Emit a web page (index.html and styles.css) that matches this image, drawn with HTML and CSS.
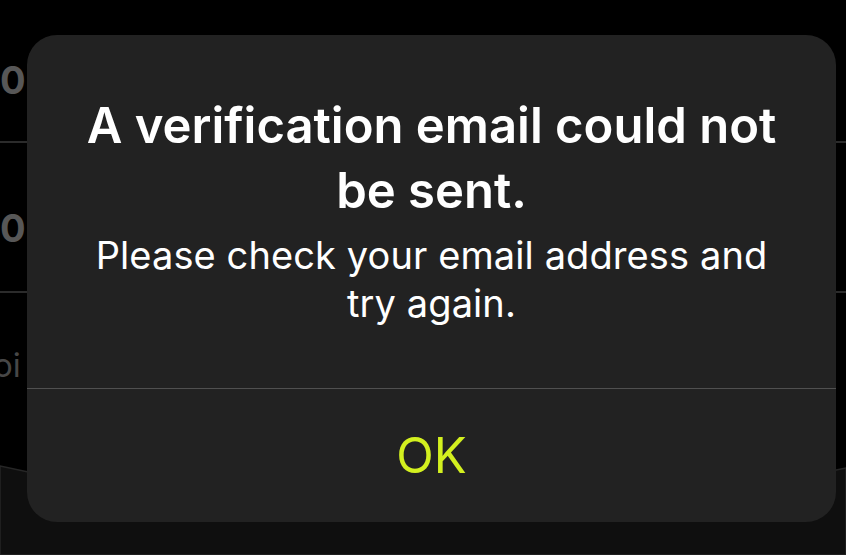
FILE: index.html
```html
<!DOCTYPE html>
<html lang="en">
<head>
<meta charset="utf-8">
<title>Alert</title>
<link rel="stylesheet" href="styles.css">
</head>
<body>
<div class="screen">
  <div class="list">
    <div class="row row-first"><span class="val">0</span></div>
    <div class="row row-second"><span class="val">0</span></div>
    <div class="row row-last"><span class="label">oi</span></div>
    <div class="sheet">
      <svg class="sheet-shape" viewBox="0 0 846 95" preserveAspectRatio="none" width="846" height="95">
        <path d="M0,6 Q423,100 846,8 L846,95 L0,95 Z" fill="#0f0f0f" stroke="#262626" stroke-width="1.5"/>
      </svg>
    </div>
  </div>

  <div class="alert" role="alertdialog">
    <div class="alert-body">
      <h1 class="alert-title">A verification email could not be sent.</h1>
      <p class="alert-message">Please check your email address and try again.</p>
    </div>
    <button class="alert-button">OK</button>
  </div>
</div>
</body>
</html>
```

FILE: styles.css
```css
* { box-sizing: border-box; }

html, body {
  margin: 0;
  padding: 0;
  background: #000;
  width: 846px;
  height: 555px;
  overflow: hidden;
  font-family: "Inter", "Noto Sans", "Liberation Sans", sans-serif;
}

.screen {
  position: relative;
  width: 846px;
  height: 555px;
}

.list {
  display: flex;
  flex-direction: column;
  height: 555px;
}

.row {
  height: 150px;
  border-bottom: 2px solid #2b2b2b;
  display: flex;
  align-items: center;
  flex-shrink: 0;
}

.row-first {
  height: 143px;
  padding-top: 18px;
}

.row-second {
  padding-top: 22px;
}

.row .val {
  font-weight: 700;
  font-size: 38px;
  color: #575757;
}

.row-last {
  border-bottom: none;
  height: 150px;
  align-items: flex-start;
  padding-top: 52px;
}

.row .label {
  font-size: 33px;
  color: #474747;
  margin-left: -7px;
}

.sheet {
  margin-top: auto;
  height: 95px;
  flex-shrink: 0;
}

.sheet-shape {
  display: block;
}

.alert {
  position: absolute;
  left: 27px;
  top: 35px;
  width: 809px;
  height: 487px;
  background: #222222;
  border-radius: 30px;
  display: flex;
  flex-direction: column;
  overflow: hidden;
}

.alert-body {
  padding: 58px 44px 0;
  height: 354px;
  border-bottom: 1px solid #505050;
  text-align: center;
  color: #fff;
}

.alert-title {
  margin: 0;
  font-size: 49px;
  line-height: 65px;
  font-weight: 600;
  letter-spacing: 0;
}

.alert-message {
  margin: 8px 0 0;
  font-size: 38px;
  line-height: 48px;
  font-weight: 400;
  letter-spacing: 0.1px;
}

.alert-button {
  flex: 1;
  background: transparent;
  border: none;
  padding: 0;
  margin: 0;
  font-family: inherit;
  font-size: 49px;
  font-weight: 400;
  color: #d3f01f;
  display: flex;
  align-items: center;
  justify-content: center;
  cursor: pointer;
}
```
